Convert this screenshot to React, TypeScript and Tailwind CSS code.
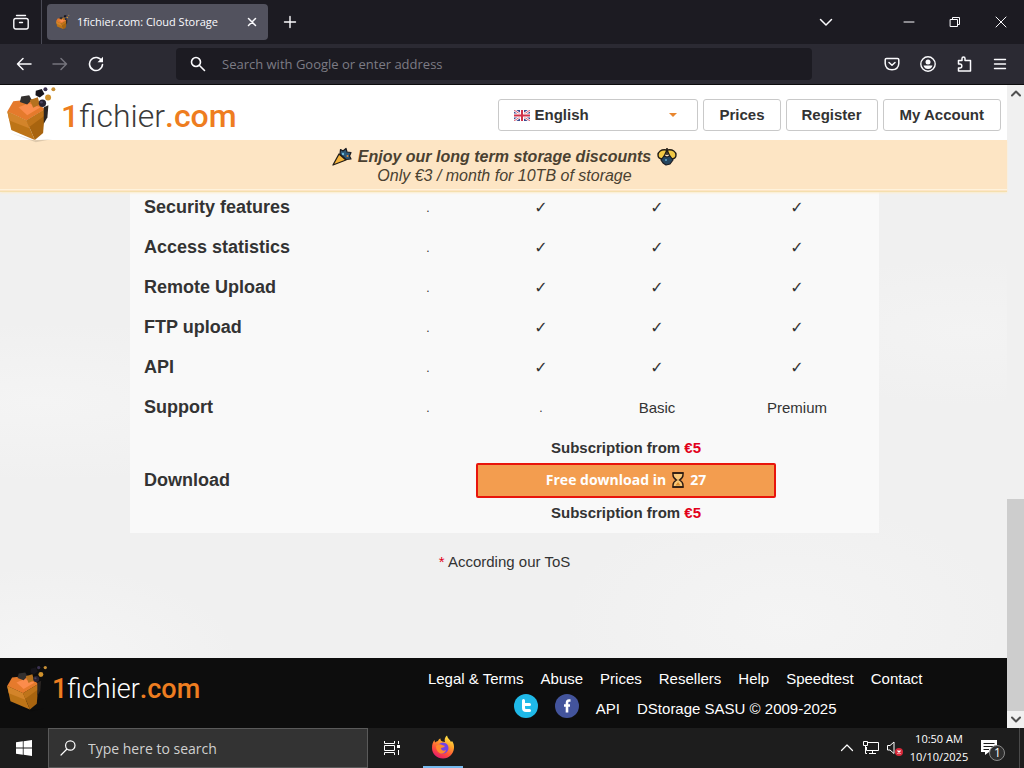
import { clsx } from "clsx";
import type { ReactNode } from "react";

const features = [
  { name: "Security features", values: [".", "✓", "✓", "✓"] },
  { name: "Access statistics", values: [".", "✓", "✓", "✓"] },
  { name: "Remote Upload", values: [".", "✓", "✓", "✓"] },
  { name: "FTP upload", values: [".", "✓", "✓", "✓"] },
  { name: "API", values: [".", "✓", "✓", "✓"] },
  { name: "Support", values: [".", ".", "Basic", "Premium"] },
];

const footerLinks = [
  "Legal & Terms",
  "Abuse",
  "Prices",
  "Resellers",
  "Help",
  "Speedtest",
  "Contact",
];

const IconButton = ({
  label,
  className,
  children,
}: {
  label: string;
  className?: string;
  children: ReactNode;
}) => (
  <button
    aria-label={label}
    className={clsx("flex shrink-0 items-center justify-center", className)}
  >
    {children}
  </button>
);

const Stroke = ({
  d,
  className = "size-4",
  width = 1.5,
}: {
  d: string;
  className?: string;
  width?: number;
}) => (
  <svg
    viewBox="0 0 16 16"
    fill="none"
    stroke="currentColor"
    strokeWidth={width}
    strokeLinecap="round"
    strokeLinejoin="round"
    className={className}
  >
    <path d={d} />
  </svg>
);

const Cube = ({ className }: { className?: string }) => (
  <svg viewBox="20 15 160 175" className={className}>
    <path d="M30 158 L105 182 L160 178 L110 188 Z" fill="#000" opacity="0.12" />
    <path d="M24 95 L42 64 L100 58 L138 88 L82 122 Z" fill="#e57a2c" />
    <path d="M58 82 L88 70 L124 82 L84 106 Z" fill="#fb8c4c" />
    <path d="M24 95 L82 122 L107 181 L36 151 Z" fill="#bd7417" />
    <path d="M24 95 L82 122 L92 146 L30 122 Z" fill="#d3842a" />
    <path d="M82 122 L138 88 L132 160 L107 181 Z" fill="#a8640f" />
    <path d="M82 122 L138 88 L136 108 L90 142 Z" fill="#bf741a" />
    <path d="M134 82 L148 76 L145 112 L134 132 Z" fill="#2a2522" />
    <path d="M66 50 L90 46 L98 60 L84 74 L62 66 Z" fill="#33302f" />
    <path d="M92 60 L116 52 L122 74 L102 84 Z" fill="#b5711f" />
    <path d="M110 32 L128 27 L136 42 L122 53 L109 46 Z" fill="#17151c" />
    <circle cx="139" cy="28" r="6" fill="#3a3150" />
    <circle cx="163" cy="28" r="6" fill="#c99137" />
    <circle cx="147" cy="53" r="9" fill="#d0922c" />
    <circle cx="130" cy="70" r="11" fill="#282333" />
    <circle cx="127" cy="67" r="4" fill="#4b4460" />
  </svg>
);

const Firefox = ({ className }: { className?: string }) => (
  <svg viewBox="0 0 24 24" className={className}>
    <defs>
      <linearGradient id="fox" x1="0.8" y1="0" x2="0.3" y2="1">
        <stop offset="0" stopColor="#fff44f" />
        <stop offset="0.35" stopColor="#ffa62b" />
        <stop offset="0.7" stopColor="#ff4f3a" />
        <stop offset="1" stopColor="#e4186f" />
      </linearGradient>
    </defs>
    <path
      d="M1 13 C1 9 2 7 3.500 5 L4 7.500 C5 6.500 6 6 7 6 C7.500 4.500 8.500 3.800 9.500 3.500 C9.300 5 10 6 11.500 6.500 L14 7 C13 4.500 14 2 16 0.500 C16.500 3.500 19 4.500 20 7 L21 6 C22.500 8 23.300 10.500 23 13 C22.500 19 18 23.500 12 23.500 C6 23.500 1 19 1 13 Z"
      fill="url(#fox)"
    />
    <circle cx="12" cy="13" r="5.5" fill="#7542e5" />
    <path
      d="M5 11 C7 9 9.500 9 11 10 L14 11 C13 12.500 11 12.500 10 13 C10 15.500 13 16.500 15 15 C14.500 18 11 19.500 8.500 18 C6 16.500 5 14 5 11 Z"
      fill="#ff8a2c"
    />
  </svg>
);

const TitleBar = () => (
  <div className="flex h-11 shrink-0 items-center bg-[#1c1b22] text-[#fbfbfe]">
    <IconButton
      label="Firefox View"
      className="h-full w-[42px] border-r border-[#4a4a55]"
    >
      <svg
        viewBox="0 0 16 16"
        fill="none"
        stroke="currentColor"
        strokeWidth="1.4"
        strokeLinecap="round"
        className="size-4"
      >
        <path d="M3.500 1.500 h9" />
        <rect x="0.8" y="4.500" width="14.400" height="10.500" rx="2" />
        <path d="M6.500 8.500 h3" />
      </svg>
    </IconButton>
    <div className="ml-[5px] flex h-9 w-[221px] items-center gap-[6px] rounded bg-[#52525e] pr-2 pl-2">
      <Cube className="h-4 w-4" />
      <span className="flex-1 truncate text-[11px]">
        1fichier.com: Cloud Storage
      </span>
      <IconButton label="Close tab" className="size-4">
        <Stroke d="M4.500 4.500 L11.500 11.500 M11.500 4.500 L4.500 11.500" />
      </IconButton>
    </div>
    <IconButton label="New tab" className="ml-3 size-5">
      <Stroke d="M8 2.500 V13.500 M2.500 8 H13.500" width={1.4} />
    </IconButton>
    <div className="flex-1" />
    <IconButton label="List all tabs" className="mr-11 size-8">
      <Stroke d="M2.500 5.500 L8 11 L13.500 5.500" />
    </IconButton>
    <IconButton label="Minimize" className="h-full w-[46px]">
      <Stroke d="M3 8 H13" width={1} />
    </IconButton>
    <IconButton label="Restore" className="h-full w-[46px]">
      <Stroke d="M3.500 5.500 H10.500 V12.500 H3.500 Z M5.500 5.500 V3.500 H12.500 V10.500 H10.500" width={1} />
    </IconButton>
    <IconButton label="Close" className="h-full w-[46px]">
      <Stroke d="M3 3 L13 13 M13 3 L3 13" width={1} />
    </IconButton>
  </div>
);

const Toolbar = () => (
  <div className="flex h-[41px] shrink-0 items-center border-b border-[#0c0c0d] bg-[#2b2a33] text-[#fbfbfe]">
    <IconButton label="Back" className="ml-2 size-8">
      <Stroke d="M15 8 H1.500 M7 2.500 L1.500 8 L7 13.500" />
    </IconButton>
    <IconButton label="Forward" className="ml-1 size-8 text-[#75747d]">
      <Stroke d="M1 8 H14.500 M9 2.500 L14.500 8 L9 13.500" />
    </IconButton>
    <IconButton label="Reload" className="ml-1 size-8">
      <svg viewBox="0 0 16 16" fill="none" stroke="currentColor" className="size-4">
        <path
          d="M13.800 5 A6.500 6.500 0 1 0 14.500 8.500"
          strokeWidth="1.6"
          strokeLinecap="round"
        />
        <path d="M15 0.800 V6.300 H9.500 Z" fill="currentColor" stroke="none" />
      </svg>
    </IconButton>
    <label className="mr-16 ml-16 flex h-8 flex-1 items-center gap-4 rounded bg-[#1c1b22] px-[14px]">
      <Stroke d="M10.500 6 A4.500 4.500 0 1 1 1.500 6 A4.500 4.500 0 1 1 10.500 6 M9.500 9.500 L14.500 14.500" width={1.6} />
      <input
        aria-label="Search with Google or enter address"
        placeholder="Search with Google or enter address"
        className="min-w-0 flex-1 bg-transparent pt-[2px] text-[13px] outline-none placeholder:text-[#7c7b85]"
      />
    </label>
    <div className="mr-2 flex items-center gap-1">
      <IconButton label="Save to Pocket" className="size-8">
        <Stroke d="M2.500 2.500 H13.500 Q14.800 2.500 14.800 3.800 V7.500 Q14.500 13.500 8 13.800 Q1.500 13.500 1.200 7.500 V3.800 Q1.200 2.500 2.500 2.500 Z M5 6.500 L8 9.300 L11 6.500" />
      </IconButton>
      <IconButton label="Account" className="size-8">
        <svg viewBox="0 0 16 16" fill="none" stroke="currentColor" className="size-4">
          <circle cx="8" cy="8" r="7.2" strokeWidth="1.4" />
          <circle cx="8" cy="6" r="2.500" fill="currentColor" stroke="none" />
          <path
            d="M3.500 9.500 H12.500 Q11.500 13 8 13 Q4.500 13 3.500 9.500 Z"
            fill="currentColor"
            stroke="none"
          />
        </svg>
      </IconButton>
      <IconButton label="Extensions" className="size-8">
        <Stroke d="M2.500 4.500 H6 V2.500 Q6 1 7.500 1 Q9 1 9 2.500 V4.500 H14.500 V15 H2.500 V12 H4 Q5.800 12 5.800 10 Q5.800 8 4 8 H2.500 Z" />
      </IconButton>
      <IconButton label="Menu" className="size-8">
        <Stroke d="M2.500 3.500 H13.500 M2.500 8 H13.500 M2.500 12.500 H13.500" width={1.4} />
      </IconButton>
    </div>
  </div>
);

const PartyPopper = () => (
  <svg viewBox="0 0 20 20" className="size-5">
    <path d="M1 18 L7 7 L14 13 Z" fill="#f5b33b" stroke="#221d16" strokeWidth="1.3" strokeLinejoin="round" />
    <path d="M8 7 L8.500 2.500 L11 4 L14 1.500 L15 5 L19 5.500 L17.500 9 L19 12 L14 12.500 Z" fill="#2c5878" stroke="#1b1b20" strokeWidth="1.2" strokeLinejoin="round" />
    <circle cx="11" cy="7" r="1.2" fill="#6fb8d8" />
    <circle cx="15.500" cy="9" r="1" fill="#e78b3d" />
  </svg>
);

const PartyBall = () => (
  <svg viewBox="0 0 20 20" className="size-5">
    <path d="M9.500 3 C4 2 1 5 1 8 C1 11 3 12 6 12 L9.500 4 Z M10.500 3 C16 2 19 5 19 8 C19 11 17 12 14 12 L10.500 4 Z" fill="#f1c845" stroke="#221d16" strokeWidth="1.4" strokeLinejoin="round" />
    <path d="M10 1 V8" stroke="#221d16" strokeWidth="1.6" />
    <path d="M4 13 L7 9 L10 10 L13 9 L16 13 L13 17 L9 18 L6 16 Z" fill="#24455f" stroke="#1b1b20" strokeWidth="1.2" strokeLinejoin="round" />
    <circle cx="9" cy="13" r="1" fill="#5ca6cc" />
  </svg>
);

const Flag = () => (
  <svg viewBox="0 0 16 11" className="h-[11px] w-4 shrink-0">
    <rect width="16" height="11" fill="#3b4a8f" />
    <path d="M0 0 L16 11 M16 0 L0 11" stroke="#fff" strokeWidth="2.500" />
    <path d="M0 0 L16 11 M16 0 L0 11" stroke="#d0324a" strokeWidth="0.8" />
    <path d="M8 0 V11 M0 5.500 H16" stroke="#fff" strokeWidth="4" />
    <path d="M8 0 V11 M0 5.500 H16" stroke="#d0324a" strokeWidth="2" />
  </svg>
);

const navButton =
  "flex h-8 items-center rounded-[3px] border border-[#c9c9c9] bg-white text-[15px] font-bold text-[#333]";

const Header = () => (
  <header className="relative z-10 flex h-[55px] shrink-0 items-start justify-between bg-white px-[6px]">
    <a href="#" className="flex items-start gap-[2px] font-['Roboto',sans-serif]">
      <Cube className="h-[58px] w-[53px]" />
      <span className="mt-[11px] text-[32px] leading-10 text-[#3a3a3a]">
        <span className="font-medium text-[#ee7d20]">1</span>
        <span className="font-light">fichier</span>
        <span className="font-medium text-[#ee7d20]">.com</span>
      </span>
    </a>
    <nav className="mt-[14px] flex gap-[5px]">
      <div className={clsx(navButton, "w-[200px] gap-1 pr-5 pl-[15px]")}>
        <Flag />
        <select
          aria-label="Language"
          className="min-w-0 flex-1 appearance-none bg-transparent outline-none"
        >
          <option>English</option>
        </select>
        <svg viewBox="0 0 8 4" className="h-1 w-2">
          <path d="M0 0 H8 L4 4 Z" fill="#e8862e" />
        </svg>
      </div>
      <button className={clsx(navButton, "px-[15px]")}>Prices</button>
      <button className={clsx(navButton, "px-[15px]")}>Register</button>
      <button className={clsx(navButton, "px-4")}>My Account</button>
    </nav>
  </header>
);

const Promo = () => (
  <div className="relative shrink-0 border-b border-[#f5dfae] bg-[#fde5c4] pb-px text-center text-[#4a4131] italic shadow-[0_1px_2px_#fdeccb]">
    <div className="border-b border-[#fff3dc] pt-[7px] pb-[4px] pl-[2px] leading-[19px]">
      <p className="flex h-[19px] items-center justify-center gap-[6px] font-bold">
        <PartyPopper />
        Enjoy our long term storage discounts
        <PartyBall />
      </p>
      <p>Only €3 / month for 10TB of storage</p>
    </div>
  </div>
);

const Hourglass = () => (
  <svg viewBox="0 0 12 16" className="h-4 w-3">
    <path
      d="M1 1 H11 V3 Q11 6 7.500 8 Q11 10 11 13 V15 H1 V13 Q1 10 4.500 8 Q1 6 1 3 Z"
      fill="#f9c777"
      stroke="#2b1a12"
      strokeWidth="1.4"
    />
    <path d="M3.500 13.500 L6 10 L8.500 13.500 Z" fill="#d98b2b" />
    <path d="M0.500 1 H11.500 M0.500 15 H11.500" stroke="#2b1a12" strokeWidth="1.6" />
  </svg>
);

const Subscription = () => (
  <p className="text-[15px] leading-[22px] font-bold">
    Subscription from <span className="text-[#e2001a]">€5</span>
  </p>
);

const Offers = () => (
  <table className="mx-auto w-[749px] max-w-full shrink-0 table-fixed border-collapse bg-[#f9f9f9] text-[#333]">
    <colgroup>
      <col />
      <col className="w-[110px]" />
      <col className="w-[116px]" />
      <col className="w-[116px]" />
      <col className="w-[164px]" />
    </colgroup>
    <tbody>
      {features.map((feature) => (
        <tr key={feature.name} className="h-10">
          <th className="pl-[14px] text-left text-lg">{feature.name}</th>
          {feature.values.map((value, i) => (
            <td
              key={i}
              className={clsx(
                "pt-[2px] text-center",
                value === "✓" && "font-['DejaVu_Sans',sans-serif] text-base",
                value === "." && "text-xs",
                value.length > 1 && "text-[15px]",
              )}
            >
              {value}
            </td>
          ))}
        </tr>
      ))}
      <tr className="h-[106px]">
        <th className="pl-[14px] text-left text-lg">Download</th>
        <td colSpan={4}>
          <div className="flex flex-col items-center gap-1">
            <Subscription />
            <button className="flex h-[35px] w-[300px] items-center justify-center gap-[6px] rounded-xs border-2 border-[#e8150c] bg-[#f39d4f] font-['Open_Sans',sans-serif] text-sm font-bold text-white">
              Free download in
              <Hourglass />
              27
            </button>
            <Subscription />
          </div>
        </td>
      </tr>
    </tbody>
  </table>
);

const Footer = () => (
  <footer className="flex h-[70px] shrink-0 items-start justify-between bg-[#0d0d0d] text-white">
    <a href="#" className="flex items-start gap-[2px] pl-[6px] font-['Roboto',sans-serif]">
      <Cube className="mt-[6px] h-12 w-11" />
      <span className="mt-[13px] text-[27px] leading-9">
        <span className="font-medium text-[#ee7d20]">1</span>
        <span className="font-light">fichier</span>
        <span className="font-medium text-[#ee7d20]">.com</span>
      </span>
    </a>
    <div className="w-[66%] pt-[6px] pl-px text-[15px] leading-[30px]">
      <div className="flex justify-center gap-[17px]">
        {footerLinks.map((link) => (
          <a key={link} href="#">
            {link}
          </a>
        ))}
      </div>
      <div className="flex justify-center gap-[17px]">
        <a href="#" aria-label="Twitter">
          <svg viewBox="0 0 24 24" className="size-6">
            <circle cx="12" cy="12" r="12" fill="#1fb9e8" />
            <path
              d="M9.500 6.500 V14 Q9.500 16.500 12 16.500 H15.500 M9.500 10.500 H15.500"
              fill="none"
              stroke="#fff"
              strokeWidth="3"
              strokeLinecap="round"
            />
          </svg>
        </a>
        <a href="#" aria-label="Facebook">
          <svg viewBox="0 0 24 24" className="size-6">
            <circle cx="12" cy="12" r="12" fill="#43549c" />
            <path
              d="M15.500 6.500 H14 Q12 6.500 12 9 V18.500 M9 11.500 H15"
              fill="none"
              stroke="#fff"
              strokeWidth="2.600"
            />
          </svg>
        </a>
        <a href="#">API</a>
        <span>DStorage SASU © 2009-2025</span>
      </div>
    </div>
  </footer>
);

const Scrollbar = () => (
  <div className="flex w-[17px] shrink-0 flex-col items-center bg-[#f0f0f0] text-[#505050]">
    <Stroke d="M4 10 L8 6 L12 10" width={2} className="h-[17px] w-4" />
    <div className="flex-1" />
    <div className="h-[33%] w-full bg-[#cdcdcd]" />
    <Stroke d="M4 6 L8 10 L12 6" width={2} className="h-[17px] w-4" />
  </div>
);

const Taskbar = () => (
  <div className="flex h-10 shrink-0 items-center bg-[#1d1d1d] text-white">
    <IconButton label="Start" className="h-full w-12">
      <svg viewBox="0 0 16 16" fill="currentColor" className="size-4">
        <path d="M0 2.300 L6.800 1.300 V7.600 H0 Z M7.600 1.200 L16 0 V7.600 H7.600 Z M0 8.400 H6.800 V14.700 L0 13.700 Z M7.600 8.400 H16 V16 L7.600 14.800 Z" />
      </svg>
    </IconButton>
    <label className="flex h-full w-80 items-center gap-3 border border-[#5a5a5a] bg-[#333] px-[11px]">
      <Stroke
        d="M15 5.500 A4.700 4.700 0 1 1 5.600 5.500 A4.700 4.700 0 1 1 15 5.500 M7 9 L1 15"
        width={1.2}
      />
      <input
        aria-label="Type here to search"
        placeholder="Type here to search"
        className="min-w-0 flex-1 bg-transparent pt-[2px] text-sm outline-none placeholder:text-[#d0d0d0]"
      />
    </label>
    <IconButton label="Task View" className="h-full w-12">
      <svg viewBox="0 0 16 16" fill="none" stroke="currentColor" className="size-4">
        <path d="M0.500 1 V3.500 H10.500 V1 M0.500 15 V12.500 H10.500 V15 M0.500 5.500 H10.500 V10.500 H0.500 Z M14.500 1 V4 M14.500 10 V15" />
        <path d="M13 5 H16 V8 H13 Z" fill="currentColor" stroke="none" />
      </svg>
    </IconButton>
    <IconButton
      label="Firefox"
      className="ml-[7px] h-full w-10 border-b-2 border-[#76b9ed]"
    >
      <Firefox className="size-6" />
    </IconButton>
    <div className="flex-1" />
    <IconButton label="Show hidden icons" className="size-6">
      <Stroke d="M2.500 10.500 L8 5 L13.500 10.500" width={1.2} />
    </IconButton>
    <IconButton label="Network" className="size-6">
      <svg viewBox="0 0 16 16" fill="none" stroke="currentColor" className="size-4">
        <path d="M4.500 2.500 H15.500 V10.500 H3.500 V7 M9.500 10.500 V13.500 M6 13.500 H13" />
        <path d="M0.500 1.500 H4.500 V5.500 H0.500 Z M2.500 5.500 V13.500 H4" />
      </svg>
    </IconButton>
    <IconButton label="Volume muted" className="size-6">
      <svg viewBox="0 0 16 16" className="size-4">
        <path d="M0.500 5.500 H3 L7 2 V13.500 L3 10 H0.500 Z" fill="none" stroke="currentColor" />
        <circle cx="12" cy="12" r="4" fill="#d8293a" />
        <path d="M10.500 10.500 L13.500 13.500 M13.500 10.500 L10.500 13.500" stroke="#fff" strokeWidth="1.2" />
      </svg>
    </IconButton>
    <div className="w-16 text-center text-[11px] leading-[18px]">
      <div>10:50 AM</div>
      <div>10/10/2025</div>
    </div>
    <IconButton label="Notifications" className="relative mr-1 h-full w-11">
      <svg viewBox="0 0 26 26" className="size-[26px]">
        <path d="M1 5 H17 V17 H9 L5 20 V17 H1 Z" fill="#fff" />
        <path d="M3.500 8.500 H14.500 M3.500 11.500 H14.500 M3.500 14.500 H9" stroke="#1d1d1d" />
        <circle cx="17" cy="18" r="7.500" fill="#2f2f2f" stroke="#8a8a8a" />
      </svg>
      <span className="absolute top-[17px] left-[23px] text-xs leading-4">1</span>
    </IconButton>
    <div className="h-full w-[5px] border-l border-[#4a4a4a]" />
  </div>
);

export default function App() {
  return (
    <div className="flex h-screen flex-col overflow-hidden font-['Open_Sans','Noto_Sans',sans-serif]">
      <TitleBar />
      <Toolbar />
      <div className="flex min-h-0 flex-1 font-['Liberation_Sans',Arial,sans-serif]">
        <div className="flex min-w-0 flex-1 flex-col">
          <Header />
          <Promo />
          <main className="flex min-h-0 flex-1 flex-col justify-end overflow-hidden bg-[#f0f0f0] bg-[radial-gradient(ellipse_at_4%_45%,#f4f4f4_0%,transparent_22%),radial-gradient(ellipse_at_78%_92%,#f4f4f4_0%,transparent_20%),radial-gradient(ellipse_at_96%_30%,#f3f3f3_0%,transparent_16%),radial-gradient(ellipse_at_5%_100%,#f5f5f5_0%,transparent_14%)] pl-[2px]">
            <Offers />
            <p className="mt-[18px] pb-[85px] text-center text-[15px] leading-[22px] text-[#333]">
              <span className="text-[#e2001a]">*</span> According our ToS
            </p>
          </main>
          <Footer />
        </div>
        <Scrollbar />
      </div>
      <Taskbar />
    </div>
  );
}
